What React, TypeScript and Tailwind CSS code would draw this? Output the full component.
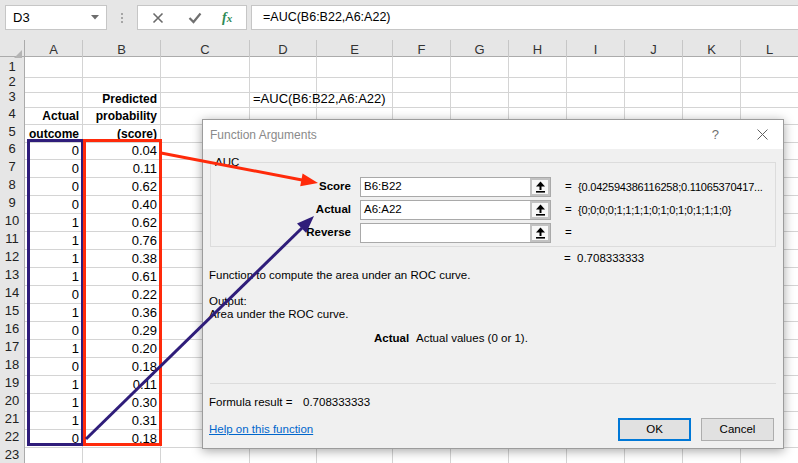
import React from "react";

const colLetters = ["A", "B", "C", "D", "E", "F", "G", "H", "I", "J", "K", "L"];
const actual = [0, 0, 0, 0, 1, 1, 1, 1, 0, 1, 0, 1, 0, 1, 1, 1, 0];
const score = ["0.04", "0.11", "0.62", "0.40", "0.62", "0.76", "0.38", "0.61", "0.22", "0.36", "0.29", "0.20", "0.18", "0.11", "0.30", "0.31", "0.18"];

const gridCols = "grid grid-cols-[25px_58px_78px_89px_67px_76px_58px_58px_58px_58px_58px_58px_58px]";

const rowHeight = (n: number) => {
  if (n === 1 || n === 2) return "h-[15px]";
  if (n === 3 || n === 5) return "h-[17px]";
  return "h-[18px]";
};

// contents of a cell, keyed by row then column index (0 = A)
const cellText = (row: number, col: number): { text: string; bold?: boolean; align: "left" | "right" } | null => {
  if (row === 3 && col === 1) return { text: "Predicted", bold: true, align: "right" };
  if (row === 4 && col === 0) return { text: "Actual", bold: true, align: "right" };
  if (row === 4 && col === 1) return { text: "probability", bold: true, align: "right" };
  if (row === 5 && col === 0) return { text: "outcome", bold: true, align: "right" };
  if (row === 5 && col === 1) return { text: "(score)", bold: true, align: "right" };
  if (row === 3 && col === 3) return { text: "=AUC(B6:B22,A6:A22)", align: "left" };
  if (row >= 6 && row <= 22 && col === 0) return { text: String(actual[row - 6]), align: "right" };
  if (row >= 6 && row <= 22 && col === 1) return { text: score[row - 6], align: "right" };
  return null;
};

const UpArrow = () => (
  <svg width="11" height="12" viewBox="0 0 11 12">
    <polygon points="5.5,0.5 10,5.5 1,5.5" fill="#000" />
    <rect x="4.5" y="5" width="2" height="4" fill="#000" />
    <rect x="1" y="10" width="9" height="1.6" fill="#000" />
  </svg>
);

const RefInput = ({ value }: { value: string }) => (
  <div className="flex h-[20px] w-[191px] border border-[#a9a9a9] bg-white">
    <div className="flex-1 flex items-center pl-[3px] text-[11.5px] text-black">{value}</div>
    <div className="w-[20px] h-full bg-[#c2c2c2] p-[2px]">
      <div className="w-full h-full bg-[#f7f7f7] flex items-center justify-center">
        <UpArrow />
      </div>
    </div>
  </div>
);

const ArgRow = ({ label, value, result }: { label: string; value: string; result: string }) => (
  <div className="flex items-center h-[20px]">
    <div className="w-[140px] text-right font-bold text-[11.5px]">{label}</div>
    <div className="ml-[9px]">
      <RefInput value={value} />
    </div>
    <div className="ml-[14px] w-[13px] text-[11.5px]">=</div>
    <div className="text-[11px] tracking-[-0.2px] whitespace-nowrap">{result}</div>
  </div>
);

const FunctionArguments = () => (
  <div className="absolute left-[202px] top-[119px] w-[582px] h-[330px] z-10 border border-[#9c9c9c] bg-[#f0f0f0] shadow-[0_2px_10px_rgba(0,0,0,0.35)] font-['Liberation_Sans',sans-serif] text-black flex flex-col">
    <div className="h-[29px] bg-white flex items-center pl-[7px] text-[12px] text-[#8a8a8a] shrink-0">
      <span>Function Arguments</span>
      <span className="ml-auto mr-[38px] text-[#707070] text-[13px]">?</span>
      <svg width="11" height="11" viewBox="0 0 11 11" className="mr-[15px]">
        <path d="M0.5 0.5 L10.5 10.5 M10.5 0.5 L0.5 10.5" stroke="#606060" strokeWidth="1" />
      </svg>
    </div>

    <div className="flex flex-col px-[6px]">
      <fieldset className="mt-[7px] ml-[1px] mr-[1px] border border-[#dcdcdc] px-0 pt-0 pb-[4px] h-[91px]">
        <legend className="ml-[4px] px-0 text-[11.5px] leading-[12px]">AUC</legend>
        <div className="flex flex-col gap-[3px] pt-[9px]">
          <ArgRow label="Score" value="B6:B22" result="{0.042594386116258;0.11065370417..." />
          <ArgRow label="Actual" value="A6:A22" result="{0;0;0;0;1;1;1;1;0;1;0;1;0;1;1;1;0}" />
          <ArgRow label="Reverse" value="" result="" />
        </div>
      </fieldset>

      <div className="mt-[5px] h-[13px] flex items-center text-[11.5px] ml-[355px]">
        <span className="w-[13px]">=</span>
        <span>0.708333333</span>
      </div>

      <div className="mt-[4px] h-[13px] leading-[13px] text-[11.5px]">Function to compute the area under an ROC curve.</div>

      <div className="mt-[13px] leading-[13px] text-[11.5px]">
        <div>Output:</div>
        <div>Area under the ROC curve.</div>
      </div>

      <div className="mt-[11px] h-[13px] flex items-center text-[11.5px] ml-[165px]">
        <span className="font-bold w-[42px]">Actual</span>
        <span>Actual values (0 or 1).</span>
      </div>

      <div className="mt-[38px] mx-[1px] h-px bg-[#dcdcdc]" />

      <div className="mt-[12px] h-[13px] flex items-center text-[11.5px]">
        <span className="w-[94px]">Formula result =</span>
        <span>0.708333333</span>
      </div>

      <div className="mt-[9px] h-[23px] flex items-center mr-[3px]">
        <span className="text-[11.5px] text-[#0066cc] underline">Help on this function</span>
        <div className="ml-auto flex gap-[10px]">
          <div className="w-[73px] h-[23px] border-2 border-[#0078d7] bg-[#e1e1e1] flex items-center justify-center text-[11.5px]">OK</div>
          <div className="w-[73px] h-[23px] border border-[#adadad] bg-[#e1e1e1] flex items-center justify-center text-[11.5px]">Cancel</div>
        </div>
      </div>
    </div>
  </div>
);

const Annotations = () => (
  <svg className="absolute inset-0 z-20 pointer-events-none" width="798" height="463" viewBox="0 0 798 463">
    <rect x="28.5" y="140.5" width="54" height="304" fill="none" stroke="#2f1d7a" strokeWidth="3" />
    <rect x="84.5" y="140.5" width="76" height="304" fill="none" stroke="#ff2a0a" strokeWidth="3" />
    <line x1="161" y1="153" x2="302" y2="180" stroke="#ff2a0a" strokeWidth="3" />
    <polygon points="318,183 300.2,186.3 302.6,173.5" fill="#ff2a0a" />
    <line x1="86" y1="439" x2="302" y2="228" stroke="#2f1d7a" strokeWidth="3" />
    <polygon points="314,216 306.2,233 297,223.6" fill="#2f1d7a" />
  </svg>
);

const Sheet = () => {
  const rows = Array.from({ length: 23 }, (_, i) => i + 1);
  return (
    <div className="flex flex-col">
      {/* column headers */}
      <div className={`${gridCols} h-[17px] bg-[#e6e6e6] border-b border-[#ababab]`}>
        <div className="relative border-r border-[#ababab]">
          <svg width="8" height="8" viewBox="0 0 8 8" className="absolute right-[2px] bottom-[2px]">
            <polygon points="8,0 8,8 0,8" fill="#b4b4b4" />
          </svg>
        </div>
        {colLetters.map((c) => (
          <div key={c} className="border-r border-[#c6c6c6] flex items-center justify-center text-[13px] text-[#333]">
            {c}
          </div>
        ))}
      </div>
      {rows.map((r) => (
        <div key={r} className={`${gridCols} ${rowHeight(r)}`}>
          <div className="bg-[#e6e6e6] border-r border-[#ababab] border-b border-b-[#c9c9c9] flex items-center justify-center text-[13px] text-[#222]">
            {r}
          </div>
          {colLetters.map((_, ci) => {
            const c = cellText(r, ci);
            return (
              <div
                key={ci}
                className={`border-r border-b border-[#d4d4d4] flex items-end pb-[1px] px-[3px] whitespace-nowrap ${
                  c?.align === "right" ? "justify-end" : "justify-start"
                } ${c?.align === "left" ? "overflow-visible relative z-[1]" : "overflow-hidden"}`}
              >
                {c && (
                  <span className={c.bold ? "font-bold text-[12px] leading-[14px]" : "text-[13px] leading-[15px]"}>{c.text}</span>
                )}
              </div>
            );
          })}
        </div>
      ))}
    </div>
  );
};

export default function App() {
  return (
    <div className="relative w-[798px] h-[463px] overflow-hidden bg-white font-['Liberation_Sans',sans-serif] text-black">
      {/* formula bar */}
      <div className="h-[40px] bg-[#e6e6e6] flex items-start pt-[5px] pl-[5px]">
        <div className="w-[102px] h-[25px] bg-white border border-[#c6c6c6] flex items-center pl-[7px] text-[13px]">
          <span>D3</span>
          <svg width="8" height="5" viewBox="0 0 8 5" className="ml-auto mr-[7px]">
            <polygon points="0,0 8,0 4,4.5" fill="#6d6d6d" />
          </svg>
        </div>
        <div className="w-[30px] h-[25px] flex flex-col items-center justify-center gap-[2px]">
          <div className="w-[2px] h-[2px] bg-[#a6a6a6]" />
          <div className="w-[2px] h-[2px] bg-[#a6a6a6]" />
          <div className="w-[2px] h-[2px] bg-[#a6a6a6]" />
        </div>
        <div className="w-[110px] h-[25px] bg-white border border-[#c6c6c6] flex items-center">
          <svg width="12" height="12" viewBox="0 0 12 12" className="ml-[14px]">
            <path d="M1.5 1.5 L10.5 10.5 M10.5 1.5 L1.5 10.5" stroke="#6a6a6a" strokeWidth="1.6" />
          </svg>
          <svg width="14" height="12" viewBox="0 0 14 12" className="ml-[24px]">
            <path d="M1.5 6 L5.5 10 L12.5 1.5" stroke="#707070" strokeWidth="2.2" fill="none" />
          </svg>
          <span className="ml-[20px] font-['Liberation_Serif',serif] italic font-bold text-[14px] text-[#2e8b57] leading-none">
            f<span className="text-[11px]">x</span>
          </span>
        </div>
        <div className="ml-[4px] flex-1 h-[25px] bg-white border border-[#c6c6c6] border-r-0 flex items-center pl-[11px] text-[12.5px]">
          =AUC(B6:B22,A6:A22)
        </div>
      </div>
      <Sheet />
      <FunctionArguments />
      <Annotations />
    </div>
  );
}
